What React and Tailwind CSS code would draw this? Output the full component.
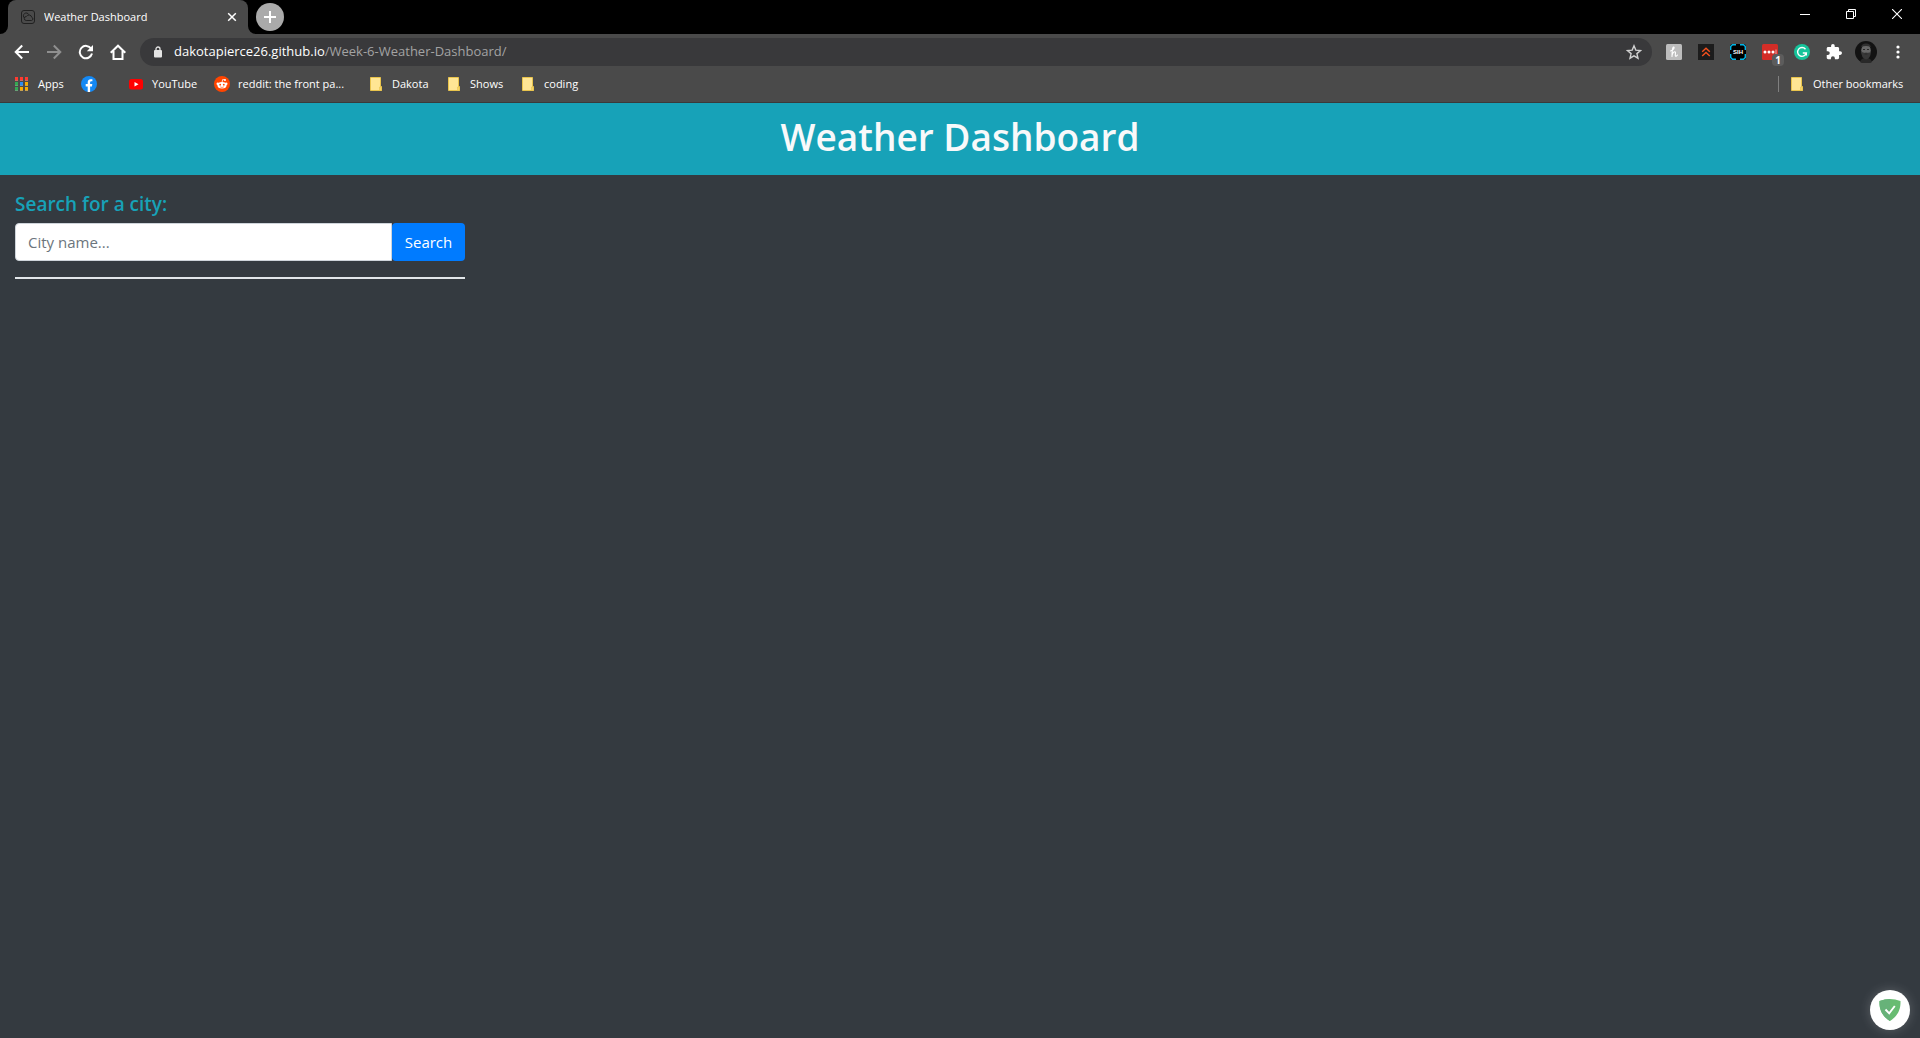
import React from "react";

function Slot({ label, children }) {
  return (
    <button type="button" aria-label={label} className="flex h-8 w-8 shrink-0 items-center justify-center">
      {children}
    </button>
  );
}

function Folder() {
  return (
    <svg width="16" height="16" viewBox="0 0 16 16" className="shrink-0">
      <path d="M2.500 1.500h10v9h1v4h-11z" fill="#ffe694" stroke="#e9c44c" />
      <path d="M11.500 14.500v-3.500h2v3.500z" fill="#f5d568" stroke="#e9c44c" strokeWidth=".6" />
    </svg>
  );
}

function AppsIcon() {
  const rows = [
    ["#ff3b30", "#ff3b30", "#ff3b30"],
    ["#34a853", "#2a8cf4", "#f9ab00"],
    ["#34a853", "#f9ab00", "#f9ab00"],
  ];
  return (
    <svg width="16" height="16" viewBox="0 0 16 16" className="shrink-0" shapeRendering="crispEdges">
      {rows.map((r, y) =>
        r.map((c, x) => (
          <g key={`${x}-${y}`}>
            <rect x={1 + x * 5} y={1 + y * 5} width="3" height="4" fill={c} />
            <rect x={1 + x * 5} y={4 + y * 5} width="3" height="1" fill="#999" opacity=".5" />
          </g>
        ))
      )}
    </svg>
  );
}

function Facebook() {
  return (
    <svg width="16" height="16" viewBox="0 0 16 16" className="shrink-0">
      <circle cx="8" cy="8" r="8" fill="#1489f5" />
      <path d="M6.700 16v-5.600H4.700V8h2V6.300c0-2 1.200-3.100 3-3.100.9 0 1.700.15 1.700.15v2h-1c-1 0-1.300.6-1.300 1.200V8h2.200l-.35 2.400H9.100V16z" fill="#fff" />
    </svg>
  );
}

function YouTube() {
  return (
    <svg width="16" height="16" viewBox="0 0 16 16" className="shrink-0">
      <rect x="1" y="3" width="14" height="10.500" rx="2.500" fill="#f00" />
      <path d="M6.500 6v4.500l4-2.250z" fill="#fff" />
    </svg>
  );
}

function Reddit() {
  return (
    <svg width="16" height="16" viewBox="0 0 16 16" className="shrink-0">
      <circle cx="8" cy="8" r="8" fill="#ff4500" />
      <path d="M8 6.500l.7-3 2.300.5" stroke="#fff" strokeWidth=".8" fill="none" />
      <circle cx="11" cy="4" r="1" fill="#fff" />
      <circle cx="3.700" cy="7.700" r="1.200" fill="#fff" />
      <circle cx="12.300" cy="7.700" r="1.200" fill="#fff" />
      <ellipse cx="8" cy="9.300" rx="4.500" ry="3.200" fill="#fff" />
      <circle cx="6.200" cy="8.700" r=".9" fill="#ff4500" />
      <circle cx="9.800" cy="8.700" r=".9" fill="#ff4500" />
      <path d="M6.200 10.900q1.800 1.100 3.600 0" stroke="#ff4500" strokeWidth=".6" fill="none" />
    </svg>
  );
}

function Bookmark({ icon, children, width }) {
  return (
    <a href="#" className="flex items-center gap-2 whitespace-nowrap" aria-label={children ? undefined : "Facebook"}>
      {icon}
      <span className={width}>{children}</span>
    </a>
  );
}

function TabStrip() {
  return (
    <div className="flex h-[34px] bg-black">
      <div className="flex w-2 items-end bg-[#4a4a4a]">
        <div className="h-[34px] w-2 rounded-br-lg bg-black" />
      </div>
      <div className="flex w-60 items-center rounded-t-lg bg-[#4a4a4a] pr-2 pl-3">
        <svg width="16" height="16" viewBox="0 0 16 16" fill="none" stroke="#202020" strokeWidth="1" className="shrink-0">
          <rect x="1.500" y="1.500" width="13" height="13" rx="2.500" />
          <path d="M6.200 11.500a2 2 0 0 1 .2-4 2.900 2.900 0 0 1 5.400.9 1.600 1.600 0 0 1-.2 3.100z" />
          <path d="M4.500 9a2.800 2.800 0 1 1 4.300-3.300" />
        </svg>
        <span className="ml-2 flex-1 truncate text-[11px] text-white">Weather Dashboard</span>
        <button type="button" aria-label="Close tab" className="flex h-4 w-4 items-center justify-center">
          <svg width="10" height="10" viewBox="0 0 10 10" stroke="#fff" strokeWidth="1.500">
            <path d="M1.200 1.200l7.600 7.600M8.800 1.200l-7.600 7.600" />
          </svg>
        </button>
      </div>
      <div className="h-[34px] w-2 bg-[#4a4a4a]">
        <div className="h-full rounded-bl-lg bg-black" />
      </div>
      <button type="button" aria-label="New tab" className="mt-[3px] flex h-7 w-7 items-center justify-center rounded-full bg-[#aaaaaa]">
        <svg width="12" height="12" viewBox="0 0 12 12" stroke="#fff" strokeWidth="2">
          <path d="M6 0v12M0 6h12" />
        </svg>
      </button>
      <div className="flex-1" />
      <div className="flex h-7">
        <button type="button" aria-label="Minimize" className="flex w-[46px] items-center justify-center">
          <svg width="10" height="10" viewBox="0 0 10 10" shapeRendering="crispEdges"><path d="M0 5h10v1H0z" fill="#fff" /></svg>
        </button>
        <button type="button" aria-label="Restore" className="flex w-[46px] items-center justify-center">
          <svg width="10" height="10" viewBox="0 0 10 10" fill="none" stroke="#fff"><path d="M.5 2.500h7v7h-7zM2.500 2.500v-2h7v7h-2" /></svg>
        </button>
        <button type="button" aria-label="Close" className="flex w-[46px] items-center justify-center">
          <svg width="10" height="10" viewBox="0 0 10 10" stroke="#fff" strokeWidth="1.100"><path d="M0 0l10 10M10 0L0 10" /></svg>
        </button>
      </div>
    </div>
  );
}

function Toolbar() {
  return (
    <div className="flex h-9 items-center bg-[#4a4a4a] pr-[6px] pl-[6px]">
      <Slot label="Back">
        <svg width="16" height="16" viewBox="0 0 16 16" fill="none" stroke="#fff" strokeWidth="2"><path d="M15 8H2M8.200 1.500L1.700 8l6.500 6.500" /></svg>
      </Slot>
      <Slot label="Forward">
        <svg width="16" height="16" viewBox="0 0 16 16" fill="none" stroke="#8f8f8f" strokeWidth="2"><path d="M1 8h13M7.800 1.500L14.300 8l-6.500 6.500" /></svg>
      </Slot>
      <Slot label="Reload">
        <svg width="16" height="16" viewBox="0 0 16 16"><path d="M13.200 4.700A6.200 6.200 0 1 0 14 9.600" fill="none" stroke="#fff" strokeWidth="2" /><path d="M15 1v6.200H8.800z" fill="#fff" /></svg>
      </Slot>
      <Slot label="Home">
        <svg width="16" height="16" viewBox="0 0 16 16" fill="none" stroke="#fff" strokeWidth="2"><path d="M.7 8.700L8 1.700l7.300 7M3.500 7v8h9V7" /></svg>
      </Slot>
      <div className="ml-[6px] flex h-7 min-w-0 flex-1 items-center rounded-full bg-[#39393b] pr-[2px] pl-[14px]">
        <svg width="8" height="12" viewBox="0 0 8 12" className="shrink-0"><path d="M2 5V3a2 2 0 0 1 4 0v2" fill="none" stroke="#e4e4e4" strokeWidth="1.300" /><rect y="4" width="8" height="7.500" rx="1" fill="#e4e4e4" /></svg>
        <a href="#" className="ml-3 flex-1 truncate text-[13px] text-[#a3a3a3]"><span className="text-white">dakotapierce26.github.io</span>/Week-6-Weather-Dashboard/</a>
        <Slot label="Bookmark this page">
          <svg width="16" height="16" viewBox="0 0 16 16" fill="none" stroke="#d0d0d0" strokeWidth="1.400"><path d="M8 1.800l1.800 4.300 4.700.4-3.600 3.100 1.100 4.600L8 11.800l-4 2.400 1.100-4.600L1.500 6.500l4.700-.4z" /></svg>
        </Slot>
      </div>
      <div className="ml-[6px] flex">
        <Slot label="Honey">
          <svg width="16" height="16" viewBox="0 0 16 16"><rect width="16" height="16" rx="1.500" fill="#bdbdbd" /><path d="M6 12.500c0-3.500.2-7 .9-8.800.5-1.100 1.500-.6 1.200.5C7.700 5.600 6.500 6.600 4.500 7M6 12c.5-2.600 1.700-4.200 2.800-4.200 1.500 0 0 3.200.6 4.200.6.600 1.600-.2 2-1" fill="none" stroke="#fff" strokeWidth="1.100" strokeLinecap="round" /></svg>
        </Slot>
        <Slot label="Video extension">
          <svg width="16" height="16" viewBox="0 0 16 16" fill="none"><rect width="16" height="16" fill="#1c1c1c" /><path d="M4.200 7.800L8 4.200l3.800 3.600M4.200 12L8 8.400l3.800 3.600" stroke="#f4511e" strokeWidth="1.400" /></svg>
        </Slot>
        <button type="button" aria-label="SIH" className="flex h-8 w-8 items-center justify-center">
          <span className="relative flex h-4 w-4 items-center justify-center">
            <svg width="16" height="16" viewBox="0 0 16 16" className="absolute"><rect width="16" height="16" rx="2.500" fill="#000" /><path d="M.7 6V2.500L2.500.7H6M10 .7h3.500l1.800 1.800V6M15.300 10v3.500l-1.800 1.800H10M6 15.300H2.500L.7 13.500V10" fill="none" stroke="#00b4e6" strokeWidth="1.400" /></svg>
            <span className="relative font-['Liberation_Sans'] text-[6px] leading-none font-bold text-white">SIH</span>
          </span>
        </button>
        <button type="button" aria-label="LastPass, 1 match" className="relative flex h-8 w-8 items-center justify-center">
          <svg width="16" height="16" viewBox="0 0 16 16"><rect width="16" height="16" rx="1.500" fill="#d32d27" /><g fill="#fff"><circle cx="3" cy="8" r="1.500" /><circle cx="7" cy="8" r="1.500" /><circle cx="11" cy="8" r="1.500" /></g><path d="M14 5.500v5" stroke="#fff" opacity=".6" /></svg>
          <span className="absolute right-0.5 bottom-0.5 flex h-3 w-3 items-center justify-center rounded-sm bg-[#5c5c5c] font-['Open_Sans'] text-[10px] leading-none font-bold text-white">1</span>
        </button>
        <Slot label="Grammarly">
          <svg width="16" height="16" viewBox="0 0 16 16" fill="none"><circle cx="8" cy="8" r="8" fill="#15c39a" /><path d="M11.500 5.200A4.400 4.400 0 1 0 12.300 9H8.800M12.300 9v2.600" stroke="#fff" strokeWidth="1.400" /></svg>
        </Slot>
        <Slot label="Extensions">
          <svg width="16" height="16" viewBox="1 1 22 22"><path fill="#fff" d="M20.500 11H19V7c0-1.100-.9-2-2-2h-4V3.500a2.500 2.500 0 0 0-5 0V5H4c-1.100 0-2 .9-2 2v3.800h1.500a2.700 2.700 0 0 1 0 5.400H2V20c0 1.100.9 2 2 2h3.800v-1.500a2.700 2.700 0 0 1 5.400 0V22H17c1.100 0 2-.9 2-2v-4h1.500a2.500 2.500 0 0 0 0-5z" /></svg>
        </Slot>
        <Slot label="Profile">
          <svg width="22" height="22" viewBox="0 0 22 22"><circle cx="11" cy="11" r="11" fill="#121212" /><path d="M5 21q1-4 6-4t6 4a11 11 0 0 1-12 0z" fill="#292929" /><ellipse cx="11" cy="9.500" rx="4.800" ry="6" fill="#686868" /><path d="M6.200 6Q6.500 2.500 11 2.500T15.800 6q-4.800-2-9.600 0z" fill="#303030" /><path d="M6.200 10q1.300 2.500 4.800 1.500 3.500 1 4.800-1 0 7-4.800 8-4.800-1-4.800-8.500z" fill="#383838" /><path d="M8 8.500h2M12 8.500h2M9.700 13h2.600" stroke="#2a2a2a" /></svg>
        </Slot>
        <Slot label="Menu">
          <svg width="4" height="14" viewBox="0 0 4 14" fill="#fff"><circle cx="2" cy="2" r="1.600" /><circle cx="2" cy="7" r="1.600" /><circle cx="2" cy="12" r="1.600" /></svg>
        </Slot>
      </div>
    </div>
  );
}

function BookmarksBar() {
  return (
    <div className="flex h-[33px] items-center justify-between border-b border-[#3a3a3a] bg-[#4a4a4a] pr-[14px] pb-1 pl-[14px] text-[11px] text-white">
      <nav className="flex items-center gap-4" aria-label="Bookmarks">
        <Bookmark icon={<AppsIcon />} width="w-[27px]">Apps</Bookmark>
        <Bookmark icon={<Facebook />} width="w-[7px]" />
        <Bookmark icon={<YouTube />} width="w-[46px]">YouTube</Bookmark>
        <Bookmark icon={<Reddit />} width="w-[114px]">reddit: the front pa...</Bookmark>
        <Bookmark icon={<Folder />} width="w-[38px]">Dakota</Bookmark>
        <Bookmark icon={<Folder />} width="w-[34px]">Shows</Bookmark>
        <Bookmark icon={<Folder />} width="w-[37px]">coding</Bookmark>
      </nav>
      <div className="flex items-center gap-[10px]">
        <div className="h-4 w-px bg-[#808080]" />
        <Bookmark icon={<Folder />} width="w-[93px]">Other bookmarks</Bookmark>
      </div>
    </div>
  );
}

export default function App() {
  return (
    <div className="flex min-h-screen flex-col bg-[#343a40] font-['Segoe_UI','Open_Sans',sans-serif]">
      <TabStrip />
      <Toolbar />
      <BookmarksBar />
      <header className="flex h-[72px] items-start justify-center bg-[#17a2b8] pt-[10px]">
        <h1 className="text-[37px] leading-[48px] font-semibold text-[#f8f9fa]">Weather Dashboard</h1>
      </header>
      <main className="flex-1 px-[15px] pt-[17px]">
        <form className="w-[450px] max-w-full" onSubmit={(e) => e.preventDefault()}>
          <label htmlFor="city" className="block text-[19px] leading-6 font-semibold text-[#17a2b8]">Search for a city:</label>
          <div className="mt-[7px] flex h-[38px]">
            <input id="city" type="text" placeholder="City name..." className="min-w-0 flex-1 rounded-l border border-[#ced4da] bg-white px-3 pt-px text-[15px] text-[#495057] placeholder:text-[#6c757d]" />
            <button type="submit" className="w-[73px] rounded bg-[#007bff] text-[15px] text-white">Search</button>
          </div>
          <hr className="mt-4 border-t-2 border-[#e2e6ea]" />
        </form>
      </main>
      <button type="button" aria-label="AdGuard" className="fixed right-[10px] bottom-2 flex h-10 w-10 items-center justify-center rounded-full bg-white shadow-[0_0_12px_rgba(255,255,255,0.2)]">
        <svg width="22" height="22" viewBox="0 0 22 22"><path d="M11 0c3.300 0 7 .7 10.500 2 0 3.800.5 13.200-10.500 20C0 15.200.5 5.800.5 2 4 .7 7.700 0 11 0z" fill="#68bc71" /><path d="M11 0v22C0 15.200.5 5.800.5 2 4 .7 7.700 0 11 0z" fill="#67b279" /><path d="M6.500 10.500l3.700 3.800 5.600-7.300" fill="none" stroke="#fff" strokeWidth="1.900" /></svg>
      </button>
    </div>
  );
}
